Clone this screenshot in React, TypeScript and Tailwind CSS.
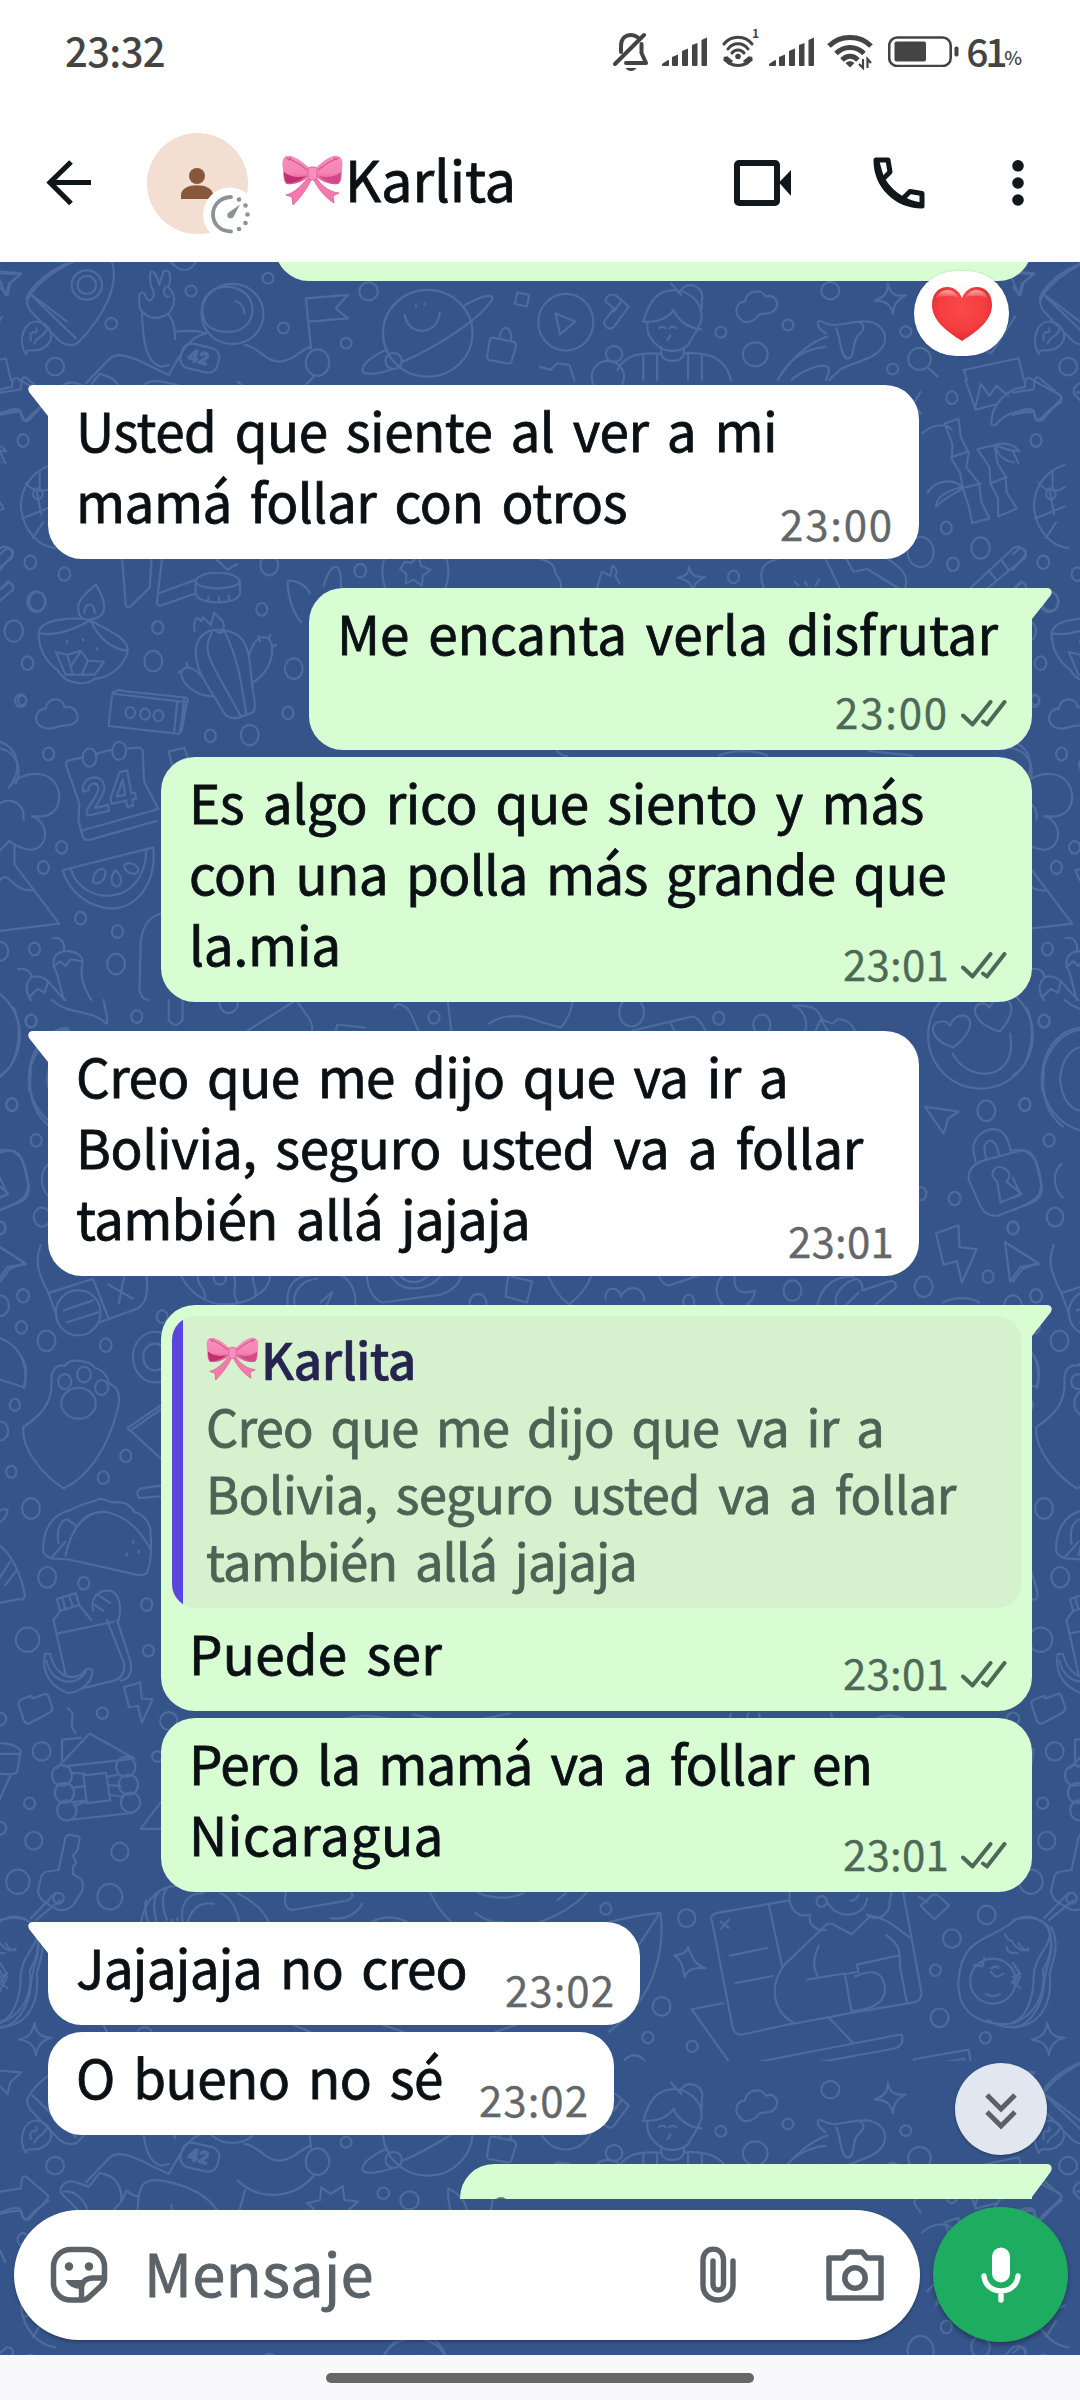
import { useLayoutEffect, useRef, useState, type ReactNode } from "react"
import clsx from "clsx"

type LineText = { text: string; width: number }

type Message = {
  lines: LineText[]
  time: string
  out?: boolean
  tail?: boolean
  box: string
  lastRow?: string
  quote?: { name: string; lines: LineText[] }
}

const messages: Message[] = [
  {
    lines: [
      { text: "Usted que siente al ver a mi", width: 701 },
      { text: "mamá follar con otros", width: 551 },
    ],
    time: "23:00",
    tail: true,
    box: "mt-[104px] w-[871px]",
  },
  {
    lines: [
      { text: "Me encanta verla disfrutar", width: 661 },
      { text: "", width: 0 },
    ],
    time: "23:00",
    out: true,
    tail: true,
    box: "mt-[29px] w-[723px]",
    lastRow: "h-[83px]",
  },
  {
    lines: [
      { text: "Es algo rico que siento y más", width: 735 },
      { text: "con una polla más grande que", width: 757 },
      { text: "la.mia", width: 152 },
    ],
    time: "23:01",
    out: true,
    box: "mt-[7px] w-[871px]",
  },
  {
    lines: [
      { text: "Creo que me dijo que va ir a", width: 712 },
      { text: "Bolivia, seguro usted va a follar", width: 787 },
      { text: "también allá jajaja", width: 454 },
    ],
    time: "23:01",
    tail: true,
    box: "mt-[29px] w-[871px]",
  },
  {
    lines: [{ text: "Puede ser", width: 253 }],
    time: "23:01",
    out: true,
    tail: true,
    box: "mt-[29px] w-[871px]",
    quote: {
      name: "Karlita",
      lines: [
        { text: "Creo que me dijo que va ir a", width: 678 },
        { text: "Bolivia, seguro usted va a follar", width: 750 },
        { text: "también allá jajaja", width: 431 },
      ],
    },
  },
  {
    lines: [
      { text: "Pero la mamá va a follar en", width: 683 },
      { text: "Nicaragua", width: 255 },
    ],
    time: "23:01",
    out: true,
    box: "mt-[7px] w-[871px]",
  },
  { lines: [{ text: "Jajajaja no creo", width: 391 }], time: "23:02", tail: true, box: "mt-[30px] w-[592px]" },
  { lines: [{ text: "O bueno no sé", width: 367 }], time: "23:02", box: "mt-[7px] w-[566px]" },
]

const timeWidths: Record<string, number> = { "23:00": 114, "23:01": 106, "23:02": 110 }

// spreads the letters so the line takes exactly `width` px
const Fit = ({ text, width }: LineText) => {
  const ref = useRef<HTMLSpanElement>(null)
  const [spacing, setSpacing] = useState(0)

  useLayoutEffect(() => {
    if (!ref.current || !text) return
    const natural = ref.current.getBoundingClientRect().width
    setSpacing((width - natural) / text.length)
  }, [])

  return (
    <span ref={ref} className="inline-block whitespace-nowrap" style={{ letterSpacing: spacing }}>
      {text}
    </span>
  )
}

const Bow = ({ className }: { className?: string }) => (
  <svg viewBox="0 0 61 50" className={className} fill="none">
    <defs>
      <linearGradient id="bow" x1="0" y1="0" x2="0" y2="1">
        <stop offset="0" stopColor="#f990bd" />
        <stop offset="0.6" stopColor="#f583b3" />
        <stop offset="1" stopColor="#dc4c8d" />
      </linearGradient>
    </defs>
    <path d="M25 24 C18 32 12 38 4 40 L10 42 L11 50 C18 43 25 34 29 25 Z" fill="#f47aae" stroke="#d95a95" strokeWidth="0.8" />
    <path d="M35 24 C41 32 48 37 57 38 L51 41 L52 48 C44 43 36 34 32 25 Z" fill="#f47aae" stroke="#d95a95" strokeWidth="0.8" />
    <path d="M27 13 C19 5 10 0 5 1 C0 2 0 8 1 14 C1 22 2 28 5 29 C12 30 20 27 27 22 Z" fill="url(#bow)" />
    <path d="M34 13 C42 5 50 0 55 1 C61 2 61 8 60 14 C60 22 59 28 56 29 C49 30 41 27 34 22 Z" fill="url(#bow)" />
    <path d="M2 20 C3 26 4 28 6 28 C12 28 18 26 24 21 C16 23 8 22 2 17 Z" fill="#c22e72" />
    <path d="M59 20 C58 26 57 28 55 28 C49 28 43 26 37 21 C45 23 53 22 59 17 Z" fill="#d34a87" />
    <path d="M4 3 C11 5 19 10 25 15 M57 3 C50 5 42 10 36 15 M9 2 C8 4 7 5 6 5 M52 2 C53 4 54 5 55 5" stroke="#d65290" strokeWidth="1.2" />
    <rect x="26" y="12" width="9" height="13" rx="3" fill="#f78fbd" stroke="#d95a95" strokeWidth="0.8" />
  </svg>
)

const Heart = () => (
  <svg viewBox="0 0 60 54" className="h-[54px] w-[60px]">
    <defs>
      <radialGradient id="heart" cx="0.5" cy="0.4" r="0.65">
        <stop offset="0" stopColor="#fb4a48" />
        <stop offset="0.6" stopColor="#f43d3f" />
        <stop offset="1" stopColor="#d9252c" />
      </radialGradient>
      <linearGradient id="gloss" x1="0" y1="0" x2="0" y2="1">
        <stop offset="0" stopColor="#fff" stopOpacity="0.55" />
        <stop offset="1" stopColor="#fff" stopOpacity="0" />
      </linearGradient>
    </defs>
    <path d="M30 11 C27 4 22 0 15.500 0 C6 0 0 7 0 18 C0 33 14 44 30 54 C46 44 60 33 60 18 C60 7 54 0 44.500 0 C38 0 33 4 30 11 Z" fill="url(#heart)" />
    <path d="M4 12 C6 3 20 -2 27 11 C20 8 10 8 4 12 Z M33 11 C40 -2 54 3 56 12 C50 8 40 8 33 11 Z" fill="url(#gloss)" />
  </svg>
)

const Ticks = () => (
  <svg viewBox="0 0 46 28" className="mb-[4px] h-[28px] w-[46px]" fill="none" stroke="currentColor" strokeWidth="4" strokeLinecap="round" strokeLinejoin="round">
    <path d="M2 15.500 L11.500 24.500 L29.500 2 M22 21.500 L26 24.500 L43.500 2" />
  </svg>
)

const Tail = ({ out, className = "h-[31px]" }: { out?: boolean; className?: string }) => (
  <svg
    viewBox="0 0 21 30"
    preserveAspectRatio="none"
    className={clsx("absolute top-0 w-[21px]", className, out ? "-right-[20px] -scale-x-100 text-[#d8fdd2]" : "-left-[20px] text-white")}
  >
    <path d="M21 0 H5 C0 0 -1 4.500 2 8 L20 30 H21 Z" fill="currentColor" />
  </svg>
)

const SignalBars = ({ className }: { className?: string }) => (
  <svg viewBox="0 0 46 30" className={clsx("h-[30px] w-[46px] fill-[#444]", className)}>
    <path d="M0 27 L6 23 Q7 23 7 24 V28 Q7 29 6 29 H1 Q0 29 0 28 Z" />
    <path d="M10 20 L16 17.500 V28 Q16 29 15 29 H11 Q10 29 10 28 Z" />
    <path d="M20 14 L26 11.500 V28 Q26 29 25 29 H21 Q20 29 20 28 Z" />
    <path d="M30 8 L35.500 6 V28 Q35.500 29 34.500 29 H31 Q30 29 30 28 Z" />
    <path d="M39.500 3 L45 0.500 V28 Q45 29 44 29 H40.500 Q39.500 29 39.500 28 Z" />
  </svg>
)

// doodle wallpaper, one tile is 1013 x 1799
const Doodles = () => (
  <>
    <g transform="scale(0.3444 0.3333)">
      <path d="M325 785 C345 850 310 940 225 1030 C210 1040 185 1035 170 1020 L95 940 C80 925 75 905 82 895 C110 840 190 790 250 770 M95 890 L220 1015" />
      <circle cx="252" cy="855" r="44" />
      <circle cx="252" cy="855" r="27" />
      <path d="M75 1062 C50 1020 70 960 110 965 C150 975 165 1020 125 1045 C100 1060 80 1040 75 1062 M90 1020 C80 980 115 1010 105 985 M100 1030 C115 1000 120 1020 135 990" />
      <path d="M405 905 C400 870 420 870 425 895 C440 915 455 880 440 862 C425 800 450 800 462 855 L475 815 C495 800 500 840 487 860 C520 890 505 940 470 950 C430 965 400 930 405 905 M412 940 C415 1010 420 1090 470 1100 L490 1095 M490 945 C510 970 508 1000 508 1018 M480 860 C470 880 480 890 490 890" />
      <circle cx="675" cy="942" r="90" />
      <path d="M595 965 C570 900 610 860 660 860 C730 865 750 930 720 970 C690 1010 610 1000 595 965 M685 903 Q710 915 710 942" />
      <path d="M510 995 C560 990 580 995 600 1000 C550 1010 530 1050 490 1125 L400 1080 C350 1060 330 1060 310 1085 L250 1150 M710 1035 C750 1040 770 1085 810 1085 C850 1085 870 1050 903 1040" />
      <rect x="525" y="1037" width="110" height="75" rx="28" transform="rotate(14 580 1075)" />
      <text x="545" y="1090" fontSize="48" fontFamily="Inter" transform="rotate(14 580 1075)">42</text>
      <path d="M903 1045 L888 895 L1010 885 L975 925 L1010 955 L895 965 M495 785 Q540 835 570 785" />
      <ellipse cx="922" cy="1088" rx="34" ry="40" />
      <circle cx="1242" cy="1000" r="130" />
      <path d="M1350 915 C1420 875 1440 885 1425 905 C1380 970 1250 1050 1165 1087 M1140 1108 C1090 1125 1040 1130 1055 1100 C1065 1080 1100 1060 1125 1048 M1175 945 C1185 1010 1270 1010 1277 937 M1208 916 V920 M1232 910 V914" />
      <circle cx="1143" cy="1083" r="24" />
      <path d="M1430 1013 L1490 1025 Q1500 1028 1498 1040 L1485 1085 Q1482 1093 1472 1090 L1420 1080 Q1412 1076 1415 1066 L1422 1020 Q1424 1012 1430 1013 M1450 1013 C1455 970 1490 975 1483 1022" />
      <path d="M1502 877 L1537 885 L1530 919 L1495 912 Z M0 815 L62 820 L30 850 L22 885 L0 862" />
      <circle cx="778" cy="835" r="16" />
      <circle cx="555" cy="873" r="16" />
      <circle cx="323" cy="971" r="17" />
      <circle cx="823" cy="984" r="16" />
      <circle cx="1005" cy="1030" r="16" />
      <circle cx="1070" cy="874" r="27" />
      <circle cx="160" cy="1100" r="26" />
    </g>
    <g transform="translate(540 0) scale(0.3444 0.3333)">
      <ellipse cx="75" cy="967" rx="80" ry="85" />
      <path d="M45 940 L102 965 L58 1003 Z M190 905 C195 880 215 880 225 890 L258 920 L215 980 C200 995 180 975 188 962 L215 925 Z M215 935 L235 905" />
      <path d="M300 965 C320 890 350 870 395 870 C450 880 475 920 468 960 C460 990 440 1015 430 1035 C410 1055 370 1060 345 1040 C310 1010 310 990 312 970 M300 965 C345 970 375 950 388 930 C400 960 430 985 468 988 M380 850 L410 885 M410 870 C430 840 480 860 470 900 L470 925 M345 985 q10 -10 20 0 M375 985 q10 -10 20 0 M375 1010 Q385 1000 370 1020" />
      <path d="M352 1040 V1062 C280 1055 245 1070 225 1110 M418 1045 V1060 C500 1055 540 1080 555 1140 M340 1062 V1140 M430 1062 V1140 M352 1062 C360 1090 410 1090 418 1062 M300 1065 V1140 M470 1065 V1140" />
      <path d="M585 960 C560 940 570 905 595 905 C600 870 645 865 655 890 C680 880 695 905 685 925 C670 950 645 935 635 945 C620 970 590 970 585 960" />
      <path d="M690 1140 C720 1080 760 1050 830 1040 M830 1000 C800 980 800 955 820 965 C850 985 870 970 930 965 C980 960 1010 990 1000 1030 C980 1080 920 1080 870 1110 L840 1140 M860 985 C875 1020 870 1060 890 1075 C920 1080 900 1020 930 1000 C945 985 940 970 925 966 M700 1125 C740 1060 800 1020 835 1010" />
      <path d="M1010 850 C1015 885 1035 890 1062 886 C1035 900 1025 920 1025 942 C1020 915 1000 900 972 902 C1000 890 1010 880 1010 850 Z" />
      <path d="M1365 820 L1435 822 L1400 850 L1390 885 Z M1450 895 C1470 850 1520 810 1570 790 M1465 885 L1568 965 M1230 1110 L1390 1075 L1405 1140 M1240 1140 L1230 1110 M1380 950 L1310 1060 L1290 1050" />
      <path d="M0 1100 L30 1110 L50 1090 L85 1095 L100 1140" />
      <circle cx="215" cy="1062" r="24" />
      <circle cx="197" cy="1130" r="47" />
      <circle cx="1102" cy="1077" r="33" />
      <path d="M1125 1102 L1155 1130" />
      <circle cx="843" cy="872" r="26" />
      <circle cx="625" cy="1063" r="36" />
      <circle cx="720" cy="975" r="16" />
      <circle cx="525" cy="997" r="16" />
      <circle cx="1062" cy="995" r="16" />
      <circle cx="1024" cy="1107" r="16" />
      <path d="M830 1140 C870 1060 760 1110 730 1140" />
    </g>
    <g transform="translate(0 341) scale(0.3444 0.3333)">
      <path d="M0 155 L60 145 L64 115 Q68 105 78 112 L138 165 Q142 171 137 178 L85 237 Q75 245 68 235 L60 212 Q30 213 0 222" />
      <path d="M290 98 L258 140 L215 125 C190 120 170 140 178 160 L235 220 M185 155 C210 150 240 170 255 210 M295 100 C340 110 355 140 352 185 L330 210 M352 185 L367 152 L385 165 L403 170 M400 210 C400 130 420 115 470 122 C540 135 600 165 630 210 M498 195 V210" />
      <path d="M890 190 L930 180 L932 142 L960 162 L995 138 L1000 180 L1040 185 L1010 212 M895 190 L915 212 M690 122 C760 190 860 170 910 108 M712 150 L695 210" />
      <path d="M1300 145 C1300 190 1310 230 1330 260 M1300 145 Q1350 170 1355 210 M1430 165 Q1430 200 1420 230 M1115 645 C1150 580 1260 580 1290 645" />
      <circle cx="1113" cy="160" r="17" />
      <circle cx="1189" cy="181" r="27" />
    </g>
    <g transform="translate(0 380) scale(0.3444 0.3954)">
      <path d="M0 85 C30 75 60 65 62 85 C70 110 80 105 95 85 L140 55" />
      <path d="M150 215 C90 230 55 280 62 330 C70 380 110 420 160 425 M75 260 C100 290 140 280 150 270 M65 350 L150 320 M95 400 L125 360 M105 275 L120 340 M115 230 V280" />
      <circle cx="110" cy="288" r="14" />
      <circle cx="67" cy="153" r="16" />
      <path d="M0 440 L20 425 Q38 425 38 440 L0 480 M0 530 L22 510 Q40 515 38 530 L0 558 M0 180 L15 210" />
      <circle cx="88" cy="461" r="17" />
      <circle cx="187" cy="491" r="17" />
      <circle cx="105" cy="561" r="26" />
      <circle cx="40" cy="635" r="27" />
      <circle cx="80" cy="716" r="17" />
      <circle cx="60" cy="811" r="16" />
      <circle cx="445" cy="711" r="26" />
      <circle cx="458" cy="626" r="16" />
      <path d="M112 640 C120 600 220 600 262 607 C300 630 380 650 370 690 C350 740 300 755 275 755 C250 775 190 770 168 735 C130 710 112 680 112 640 C160 650 220 630 262 607 M262 607 C290 660 330 680 370 685 M230 590 C215 555 260 535 278 517 C310 560 315 600 265 605 C235 610 230 595 230 590 M245 590 C245 560 275 560 275 590 M162 688 L195 695 L235 685 L255 710 L302 712 L275 745 H190 Z M195 695 L210 740 M235 685 L205 725 M255 710 L240 740 M195 660 v4 M241 655 v4 M282 678 v4" />
      <path d="M355 455 L365 570 Q372 580 382 570 L435 525 M470 455 L455 565 Q460 575 475 568 L568 540 M435 525 L440 455 M460 540 L568 505 M568 510 C570 480 690 480 697 510 V540 C690 570 575 570 568 540 Z M568 510 C580 535 690 530 697 510 M630 455 L660 480 L690 465 M605 548 V558 M636 550 V560 M664 546 V556" />
      <path d="M565 635 C560 605 570 595 585 610 L590 600 L612 620 L622 588 L648 612 C655 635 640 650 625 632 M625 632 C560 640 550 700 600 770 L655 848 Q675 860 700 852 L735 840 Q745 830 735 790 C720 700 735 630 625 632 M615 640 C580 690 620 720 700 852 M650 632 C690 700 700 760 715 845 M722 700 C740 640 780 640 790 670 C795 720 760 750 735 765 M620 800 C560 800 520 760 528 735 C545 715 580 740 590 755 M755 660 L750 648 M780 655 L785 645 M792 675 L802 670 M530 735 L518 740 M545 725 L542 715" />
      <path d="M835 508 C835 560 860 600 875 612 M835 508 C860 505 890 520 900 540 M940 520 C950 490 965 465 982 475 C992 490 990 510 990 526" />
      <path d="M325 800 L315 875 L520 895 L542 815 L325 793 Q340 780 360 787 L540 803 Q550 806 542 818 L528 885 L520 895 M535 805 L525 880 M325 793 L515 812 L505 893" />
      <circle cx="378" cy="841" r="14" />
      <circle cx="421" cy="845" r="14" />
      <circle cx="460" cy="849" r="14" />
      <path d="M110 870 C95 850 115 830 132 832 C140 800 180 800 188 828 C215 820 235 850 220 865 C200 880 180 870 165 878 C140 885 120 880 110 870 Z" />
      <circle cx="760" cy="580" r="16" />
      <circle cx="853" cy="730" r="26" />
      <circle cx="836" cy="842" r="16" />
      <circle cx="725" cy="898" r="26" />
      <circle cx="611" cy="900" r="16" />
      <circle cx="141" cy="946" r="16" />
      <circle cx="782" cy="468" r="26" />
      <circle cx="1046" cy="482" r="17" />
      <circle cx="1206" cy="485" r="96" />
      <path d="M1175 460 L1195 462 L1215 445 L1222 470 L1250 480 L1228 495 L1225 520 L1200 505 L1178 515 L1180 490 L1162 478 Z" />
      <path d="M238 955 L200 962 Q190 965 192 975 L230 1070 M280 945 L325 935 M368 932 L405 930 Q415 932 415 945 L418 1015 M230 1070 L228 1115 L240 1155 Q245 1165 260 1163 L455 1115 M235 1140 L460 1085 M418 1015 L460 1085" />
      <ellipse cx="260" cy="955" rx="20" ry="23" />
      <ellipse cx="346" cy="938" rx="20" ry="23" />
      <text x="237" y="1088" fontSize="124" fontWeight="700" fontFamily="Inter" transform="rotate(-11 320 1050)">24</text>
      <path d="M490 940 L535 930 L545 955 L500 975 Z M182 1240 L445 1182 C455 1260 410 1330 330 1337 C250 1335 200 1290 182 1240 M205 1233 C230 1330 420 1340 425 1188 M270 1270 C270 1245 290 1230 305 1240 C310 1260 290 1280 270 1270 M335 1240 C315 1260 325 1285 345 1280 C358 1270 350 1250 335 1240 M360 1228 C370 1215 400 1225 402 1240 C395 1255 365 1250 360 1228" />
      <path d="M0 915 C50 930 70 980 25 1032 C60 980 175 980 172 1060 C165 1110 110 1105 92 1103 C150 1120 140 1190 85 1188 C60 1185 30 1170 28 1165 L0 1190 M0 1070 C30 1055 75 1070 68 1112 M42 1175 V1225 L172 1375 L0 1393 M0 1265 C20 1245 30 1270 50 1280 Q70 1293 95 1290" />
      <circle cx="179" cy="1182" r="16" />
      <circle cx="126" cy="1233" r="16" />
      <circle cx="234" cy="1361" r="16" />
      <circle cx="341" cy="1395" r="16" />
      <circle cx="337" cy="1477" r="26" />
      <circle cx="100" cy="1439" r="16" />
      <circle cx="0" cy="1445" r="24" />
      <path d="M152 1412 C180 1405 190 1430 185 1445 C150 1450 150 1480 165 1500 L185 1568 M185 1445 C220 1440 240 1460 240 1470 C230 1510 245 1540 265 1568 M155 1485 L175 1470 L190 1482 L205 1465 L238 1470 M52 1490 C80 1485 90 1500 92 1510 C70 1530 75 1550 90 1568 M92 1510 C140 1500 150 1540 190 1568 M85 1560 L110 1540 L130 1550 L140 1520 M467 1350 C420 1360 408 1400 408 1440 L405 1540 Q410 1568 430 1568" />
    </g>
    <g transform="translate(540 380) scale(0.3444 0.3954)">
      <path d="M1235 0 L1265 75 L1330 60 M1265 65 L1280 10 L1305 40 L1325 15 L1360 40 M1310 110 C1310 60 1360 20 1408 18 L1410 0 Q1420 -10 1430 0 L1510 38 Q1518 45 1510 52 L1450 100 Q1440 105 1437 95 L1433 80 C1390 75 1350 85 1325 112 Q1312 118 1310 110 Z" />
      <path d="M1110 135 C1140 110 1180 110 1195 125 M1175 110 L1215 98 L1222 145 L1245 185 L1238 220 L1275 262 L1282 310 L1305 350 L1255 362 L1245 320 L1228 275 L1220 235 L1195 200 L1198 165 Z M1195 195 L1245 180 M1220 275 L1280 262 M1125 285 C1150 250 1200 250 1225 270 C1190 280 1150 290 1150 320 C1170 300 1200 290 1225 275 M1270 175 L1320 165 L1328 210 L1352 245 L1355 285 L1385 325 L1330 345 L1330 300 L1308 262 L1305 220 Z M1308 262 L1355 245 M1320 165 C1350 155 1380 165 1392 180 C1360 180 1340 170 1320 165 C1330 190 1350 205 1375 208" />
      <circle cx="1196" cy="45" r="16" />
      <circle cx="1180" cy="374" r="16" />
      <circle cx="1279" cy="425" r="27" />
      <circle cx="1199" cy="466" r="17" />
      <circle cx="1105" cy="435" r="38" />
      <circle cx="562" cy="498" r="16" />
      <path d="M1250 526 L1375 425 Q1400 415 1410 440 Q1412 450 1400 455 L1300 526 M1305 485 L1325 505 M1340 455 L1360 480 M1400 510 L1380 526 M650 526 C630 480 650 460 690 453 M830 453 L870 526 M770 510 L775 520 M810 505 L800 520 M740 510 L750 520 M890 453 L910 485 L950 478 L1040 526 M1010 453 C1060 480 1070 500 1060 526" />
      <path d="M432 472 C440 495 450 500 480 498 C455 508 445 515 445 540 C440 510 425 505 400 500 C425 495 432 490 432 472 Z M165 526 L180 485 L205 495 L210 470 Q230 480 218 495 L232 515 M0 453 Q45 460 45 490 Q65 510 60 526" />
      <path d="M1105 30 L1085 60 L1105 85" />
      <circle cx="1482" cy="560" r="24" />
      <circle cx="1438" cy="810" r="12" />
      <path d="M1360 930 C1420 935 1440 980 1420 1020 M955 938 L1080 950 M520 950 C560 935 620 935 660 950 M50 938 Q60 950 80 952" />
    </g>
    <g transform="translate(0 1000) scale(0.3444 0.3954)">
      <path d="M150 0 C200 40 260 20 310 60 Q315 50 300 0 M0 190 C50 170 70 80 40 20 M490 0 V50 Q510 75 530 50 V0 M85 230 C75 150 130 80 200 75 M145 320 C100 290 80 240 90 180 M720 77 L860 0 L900 50 Q910 70 905 77 M1145 20 C1150 0 1180 15 1190 30 L1215 77 M975 77 L980 62 L1060 70 M1300 0 L1310 77 M1420 60 C1460 35 1520 35 1568 55" />
      <path d="M0 380 C50 375 70 400 80 450 C90 500 60 510 0 532 M0 450 L22 492 L0 500 M140 415 C110 440 120 480 145 500" />
      <circle cx="90" cy="53" r="16" />
      <circle cx="397" cy="42" r="16" />
      <circle cx="664" cy="6" r="27" />
      <circle cx="1260" cy="44" r="16" />
      <circle cx="34" cy="264" r="16" />
      <circle cx="105" cy="355" r="16" />
      <circle cx="122" cy="549" r="24" />
      <circle cx="0" cy="577" r="16" />
      <path d="M0 625 L72 665 L28 680 L0 712 M118 620 C100 660 110 690 140 740 L165 800 M145 740 L270 705 M270 705 L315 805 M290 815 L400 780 C430 765 430 730 425 697 M315 720 L385 755 M360 700 L345 768 M185 785 L270 760 M195 815 L285 790" />
      <ellipse cx="227" cy="791" rx="65" ry="57" />
      <circle cx="67" cy="748" r="17" />
      <circle cx="0" cy="773" r="26" />
      <circle cx="62" cy="828" r="16" />
      <circle cx="135" cy="862" r="26" />
      <circle cx="307" cy="873" r="17" />
      <circle cx="471" cy="801" r="16" />
      <circle cx="450" cy="903" r="34" />
      <circle cx="450" cy="903" r="64" />
      <path d="M525 697 C560 760 630 770 650 770 C720 770 780 740 785 697 M575 700 C570 720 600 730 595 755 M680 700 C690 720 670 740 690 765 M735 700 C730 720 750 730 740 750 M835 770 C830 720 860 697 900 697 M990 697 C1020 710 1035 740 1032 770 M855 770 C850 740 870 710 920 705 M930 765 L965 738 L950 770 M1065 697 Q1070 750 1110 765 L1280 745 Q1330 730 1340 697 M1135 697 C1160 740 1240 740 1280 697 M1160 697 Q1200 730 1245 697 M1475 697 L1545 712 L1530 765 L1468 750 Z" />
      <circle cx="638" cy="702" r="18" />
      <circle cx="1388" cy="768" r="25" />
      <path d="M0 855 C60 875 80 920 72 980 L0 960 M68 1080 C120 1050 150 1020 150 970 C145 935 165 920 190 925 C200 905 260 910 275 930 C300 935 315 955 315 970 C350 980 350 1010 340 1040 C310 1140 250 1210 185 1235 C120 1200 60 1130 68 1080 Z" />
      <ellipse cx="228" cy="1020" rx="50" ry="39" />
      <circle cx="188" cy="965" r="19" />
      <circle cx="244" cy="947" r="20" />
      <circle cx="295" cy="980" r="19" />
      <circle cx="43" cy="1024" r="15" />
      <circle cx="0" cy="1090" r="24" />
      <circle cx="33" cy="1193" r="15" />
      <circle cx="300" cy="1208" r="16" />
      <circle cx="365" cy="1153" r="16" />
      <circle cx="90" cy="1286" r="26" />
      <circle cx="137" cy="1460" r="26" />
      <circle cx="243" cy="1475" r="16" />
      <circle cx="426" cy="1529" r="16" />
      <path d="M467 1025 L370 1082 L467 1160 M385 1085 L467 1035 M467 1228 L410 1235 Q390 1245 405 1260 L467 1255" />
      <path d="M125 1390 C125 1340 150 1300 205 1290 C240 1270 280 1270 285 1262 C310 1260 320 1275 340 1270 C370 1270 385 1285 390 1295 C420 1300 440 1330 437 1350 C440 1380 440 1430 425 1450 Q410 1458 390 1452 L200 1415 L150 1412 Q125 1405 125 1390 M190 1405 C210 1330 250 1290 310 1295 C380 1310 410 1350 435 1385 M170 1375 C160 1330 190 1300 205 1320 Q230 1330 215 1345 M150 1410 L190 1370 M387 1368 v5 M368 1400 v5 M403 1393 v5 M0 1380 C40 1410 60 1450 72 1505 Q70 1520 55 1515 L0 1525 M0 1460 L30 1420 M15 1480 L50 1440 M0 1290 Q20 1285 22 1290 Q20 1310 0 1320" />
      <path d="M165 1515 L220 1500 L230 1530 L175 1545 Z M180 1510 L190 1540 M200 1505 L212 1535 M175 1545 L155 1568 M230 1530 L265 1568 M270 1545 C260 1500 300 1490 325 1495 C355 1510 350 1550 345 1568 M285 1505 L320 1525 M275 1530 L300 1545" />
    </g>
    <g transform="translate(540 1000) scale(0.3444 0.3954)">
      <path d="M95 0 Q90 40 60 70 L0 55 M270 77 L440 42 Q460 40 480 77 M380 60 L390 77 M735 15 C760 20 780 50 770 77 M735 15 C800 10 810 30 820 50 L850 60 L865 48 Q900 50 915 77 M800 77 L815 50 L835 77" />
      <ellipse cx="1279" cy="90" rx="152" ry="134" />
      <path d="M1200 120 C1130 100 1130 60 1160 55 Q1180 50 1190 65 Q1205 35 1235 40 C1265 55 1245 90 1200 120 M1335 80 C1260 60 1250 20 1275 10 Q1295 5 1305 20 Q1320 -10 1350 -5 C1385 15 1365 50 1335 80 M1198 135 C1240 210 1390 210 1365 85 M1118 270 L1215 282 L1185 300 L1172 338 Z M1265 410 L1258 380 C1255 330 1340 300 1360 360 L1368 382 M1295 400 L1290 375 C1295 345 1325 350 1332 390" />
      <path d="M1290 405 L1400 380 Q1430 380 1440 410 L1457 470 Q1460 500 1430 512 L1330 545 Q1295 550 1278 520 L1245 455 Q1240 420 1290 405 Z M1328 460 C1300 440 1320 415 1345 425 C1370 435 1365 450 1355 460 L1398 490 L1337 512 Z" />
      <path d="M1150 590 L1215 570 L1218 625 L1268 630 L1225 715 L1210 660 L1172 670 Z M1350 612 L1450 668 L1395 675 L1365 712 Z" />
      <path d="M23 697 Q50 750 85 770 Q130 740 150 697 M345 697 Q355 720 375 722 L460 697 M190 755 C190 720 230 725 235 750 C250 720 300 720 303 760 M530 770 C500 740 515 710 530 697 M565 700 C560 740 590 745 625 735 Q620 760 600 770 M805 770 C820 720 860 697 910 700 M860 770 C850 740 890 710 920 705 Q940 715 935 735 L1020 710 Q1040 715 1030 730 L975 770 M890 770 L925 740" />
      <path d="M1170 765 C1200 750 1250 750 1275 765" />
      <circle cx="266" cy="31" r="36" />
      <circle cx="519" cy="46" r="16" />
      <circle cx="644" cy="62" r="25" />
      <circle cx="1296" cy="280" r="26" />
      <circle cx="1204" cy="502" r="17" />
      <circle cx="1105" cy="490" r="17" />
      <circle cx="1373" cy="576" r="16" />
      <circle cx="1301" cy="700" r="16" />
      <circle cx="1114" cy="725" r="26" />
      <circle cx="733" cy="735" r="26" />
      <circle cx="432" cy="762" r="16" />
      <circle cx="1464" cy="53" r="16" />
      <circle cx="1408" cy="265" r="16" />
      <path d="M1457 200 C1460 110 1520 75 1568 70 M1457 200 C1460 270 1510 315 1568 330 M1510 200 C1515 150 1540 125 1568 120 M1510 200 C1515 250 1540 275 1568 280" />
      <path d="M1435 900 C1455 930 1450 960 1440 980" />
    </g>
    <g transform="translate(0 1620) scale(0.3444 0.3571)">
      <path d="M155 0 L190 150 M165 38 L330 5 M310 0 L360 120 Q365 160 330 170 L245 190 M340 0 L380 120 Q385 165 350 170 M130 95 C120 150 150 190 200 205 C240 200 270 170 268 140 Q250 130 240 150 C200 175 160 150 145 95 Z M135 115 C150 180 220 190 250 145" />
      <path d="M55 240 Q50 225 65 222 L90 212 L95 220 L130 207 Q140 207 142 218 L152 245 Q153 255 143 260 L85 290 Q75 292 70 283 Z M360 188 L407 175 L412 220 L443 222 L412 288 L400 240 L375 245 Z M197 247 C230 270 190 285 220 317" />
      <path d="M165 415 L260 318 L390 388 L185 410 M180 400 V335 L235 330 M205 428 L245 430 M310 440 L345 432 M210 470 L245 465 M315 462 L350 465 M210 510 L250 505 M320 490 L360 495 M200 560 L385 540 M215 520 L245 510 M242 435 L308 428 L320 505 L252 513 Z M467 510 L408 585 H467" />
      <circle cx="180" cy="435" r="29" />
      <circle cx="187" cy="484" r="28" />
      <circle cx="194" cy="533" r="28" />
      <circle cx="365" cy="411" r="28" />
      <circle cx="373" cy="461" r="28" />
      <circle cx="379" cy="511" r="28" />
      <path d="M0 345 Q40 345 60 365 L50 425 Q45 435 0 430 M32 432 L0 500 M60 375 H0" />
      <path d="M170 700 L190 610 Q195 600 205 602 L225 605 Q235 610 230 620 L225 645 L212 660 L222 680 L212 690 V712 M170 700 L135 705 Q120 710 118 725 L110 760 Q115 780 130 790 L170 812 Q200 815 215 795 L238 760 Q245 740 235 725 L212 712 M175 785 L105 840 M160 765 L90 835" />
      <circle cx="170" cy="779" r="15" />
      <circle cx="80" cy="55" r="34" />
      <circle cx="431" cy="86" r="16" />
      <circle cx="297" cy="261" r="16" />
      <circle cx="121" cy="368" r="26" />
      <circle cx="490" cy="283" r="25" />
      <circle cx="86" cy="513" r="16" />
      <circle cx="98" cy="618" r="25" />
      <circle cx="348" cy="649" r="25" />
      <circle cx="319" cy="775" r="36" />
      <circle cx="52" cy="733" r="34" />
      <circle cx="0" cy="277" r="18" />
      <circle cx="0" cy="583" r="18" />
      <circle cx="457" cy="382" r="15" />
      <path d="M0 840 C50 825 100 840 108 870 C110 920 60 940 60 1000 C60 1070 30 1120 0 1125 M105 870 C125 930 95 960 90 1020 C85 1090 40 1140 0 1142 M0 905 Q25 935 45 920 M0 960 L20 990 L0 1000 M20 1000 L10 1020" />
      <path d="M100 1128 C105 1160 120 1168 150 1170 C120 1175 108 1195 104 1218 C100 1190 85 1178 55 1175 C85 1168 95 1155 100 1128 Z" />
      <path d="M410 845 C420 780 470 740 520 745 M430 845 C420 820 420 790 425 785 M455 845 C440 800 450 770 460 765 M485 840 C460 780 480 750 495 745 M530 845 C520 780 560 765 590 765 M545 845 C560 800 590 790 620 795 M640 765 Q680 780 695 845 M690 765 Q760 800 780 845 M830 765 Q820 810 850 812 L1010 785 Q1030 775 1020 765 M960 835 C1000 840 1030 830 1052 795 M1250 765 Q1270 810 1310 845 M1380 820 Q1420 850 1460 845 M1390 765 Q1460 790 1520 765 M1080 845 Q1130 820 1180 845 M500 840 v6 M515 835 v6" />
      <path d="M300 1133 L310 1153 M400 1150 Q420 1130 440 1150 M850 1133 L900 1153 M1110 1133 L1170 1153 M1440 1153 L1500 1133 M1000 277 Q1060 260 1130 277 M1200 265 L1260 277 M1400 277 L1480 262" />
    </g>
    <g transform="translate(540 1620) scale(0.3444 0.3571)">
      <path d="M500 845 Q490 825 515 820 L725 785 M500 845 L560 1145 Q570 1165 590 1160 L735 1130 M665 800 L703 970 M1055 765 L1108 1045 Q1105 1065 1090 1070 L905 1100 M440 1090 L532 1073 M440 1090 L570 1265 Q580 1280 600 1275 L1030 1200 Q1060 1190 1050 1160 L565 1250 M840 1115 L910 1185 M525 845 L548 862 M548 840 L525 865 M552 940 L660 918 M568 1017 L675 997" />
      <path d="M835 850 L710 965 C660 1030 680 1100 740 1130 L905 1100 L885 990 L775 1007 M810 912 C790 950 795 980 808 1000 M835 850 L850 852 L905 880 L960 828 C1010 835 1045 870 1075 890 M1005 882 C1050 910 1045 940 1045 970 L1065 1070 M905 1095 C980 1090 1010 1060 1000 1020 C990 980 960 980 915 998 M885 992 L925 985 L920 965 L1040 940 M725 765 C720 810 750 835 785 825 C775 860 810 870 830 868 M830 780 C850 840 940 840 950 780 M950 825 C980 850 1020 820 1015 790 L1020 765" />
      <circle cx="818" cy="788" r="15" />
      <path d="M900 785 Q915 790 925 770 M0 845 Q80 820 135 765 M50 785 L75 765 M350 820 C250 830 190 850 200 846 M350 820 C360 900 350 1050 200 1153 M345 825 L270 935 M430 915 C440 945 450 965 480 975 C440 970 425 985 420 1000 C415 970 410 950 390 940 C420 935 430 925 430 915 Z" />
      <path d="M1105 800 L1140 770 Q1150 765 1160 775 L1188 800 L1145 838 Z M1100 775 L1125 790" />
      <path d="M1465 850 C1500 890 1480 950 1460 980 C1470 1060 1430 1110 1370 1130 C1280 1140 1210 1100 1215 1010 C1225 880 1310 900 1380 840 C1410 825 1440 830 1465 850 M1485 860 C1510 910 1490 950 1480 990 C1490 1090 1440 1140 1370 1140 Q1330 1140 1300 1120 M1350 880 Q1355 895 1372 900 M1355 915 Q1355 935 1385 933 M1390 905 Q1400 925 1418 925 M1260 965 L1285 970 L1290 945 M1395 990 L1370 1015 L1395 1030 M1310 975 Q1330 965 1330 975 M1310 985 Q1325 1010 1345 990 M1295 1048 Q1315 1058 1335 1048" />
      <ellipse cx="1315" cy="1011" rx="66" ry="63" />
      <path d="M1085 1230 L1245 1203 L1252 1250 M1085 1230 L1115 1390 L1205 1380 M1103 1252 L1232 1228 L1240 1270 M1103 1252 L1120 1340 L1205 1325" />
      <circle cx="426" cy="835" r="25" />
      <circle cx="191" cy="809" r="16" />
      <circle cx="353" cy="1082" r="26" />
      <circle cx="313" cy="1169" r="16" />
      <circle cx="442" cy="1194" r="16" />
      <circle cx="274" cy="1255" r="36" />
      <circle cx="924" cy="1268" r="16" />
      <circle cx="1148" cy="981" r="16" />
      <circle cx="1160" cy="1114" r="26" />
      <circle cx="1293" cy="1170" r="16" />
      <circle cx="1196" cy="892" r="26" />
      <circle cx="1297" cy="826" r="26" />
      <path d="M550 277 L555 262 M600 277 L605 262 M640 277 L635 262 M850 277 L845 262 M975 277 Q1010 258 1060 277" />
    </g>
  </>
)

const Wallpaper = () => (
  <svg viewBox="0 0 1080 2400" className="absolute -top-[262px] left-0 h-[2400px] w-[1080px]">
    <defs>
      <clipPath id="tile">
        <rect x="-1013" y="262" width="3039" height="1799" />
      </clipPath>
      <g
        id="doodles"
        fill="none"
        stroke="#4d6b9c"
        strokeWidth="2.200"
        strokeLinecap="round"
        strokeLinejoin="round"
        className="[&_*]:[vector-effect:non-scaling-stroke]"
      >
        <Doodles />
      </g>
    </defs>
    <g clipPath="url(#tile)">
      <use href="#doodles" />
      <use href="#doodles" x="1013" />
      <use href="#doodles" x="-1013" />
    </g>
    <g transform="translate(0 1799)">
      <g clipPath="url(#tile)">
        <use href="#doodles" />
        <use href="#doodles" x="1013" />
      </g>
    </g>
  </svg>
)

const StatusBar = () => (
  <div className="flex h-[104px] items-start justify-between pl-[65px] pr-[58px] pt-[27px] text-[#444]">
    <p className="-mt-[1px] text-[40px]/[48px] font-medium">
      <Fit text="23:32" width={100} />
    </p>
    <div className="flex h-[50px] items-start">
      <svg viewBox="0 0 36 40" className="mt-[5px] h-[40px] w-[36px]" fill="none" stroke="#444" strokeWidth="4" strokeLinecap="round" strokeLinejoin="round">
        <path d="M8 20 V14 C8 7 12 3 18 3 C21 3 23 4 25 5.500 M28.500 12 V21 L33 31 H13 M2 32 L31 3" />
        <path d="M12.500 36 H23.500 C21 40 15 40 12.500 36 Z" fill="#444" stroke="none" />
      </svg>
      <SignalBars className="ml-[13px] mt-[10px]" />
      <div className="relative ml-[14px] mt-[8px]">
        <svg viewBox="0 0 32 34" className="h-[34px] w-[32px]" fill="none" stroke="#444" strokeWidth="3" strokeLinecap="round">
          <path d="M2 9 C9 0 23 0 30 9 M6 14 C11 7 21 7 26 14 M10 18 C13 14 19 14 22 18" />
          <circle cx="16" cy="21.500" r="2.800" fill="#444" stroke="none" />
          <path d="M3 23 C8 33 24 33 29 23" strokeWidth="3" />
          <path d="M2 25 L5 22 L10 26 L7 29 Z M30 25 L27 22 L22 26 L25 29 Z" fill="#444" strokeWidth="1.500" />
        </svg>
        <span className="absolute -right-[5px] -top-[9px] text-[12px]/[14px] font-bold">1</span>
      </div>
      <SignalBars className="ml-[15px] mt-[10px]" />
      <svg viewBox="0 0 46 36" className="ml-[12px] mt-[7px] h-[36px] w-[46px]" fill="none" stroke="#444" strokeWidth="5">
        <path d="M2 12 C13 0.500 33 0.500 44 12 M9 19.500 C17 11.500 29 11.500 37 19.500 M15 26 C20 21 26 21 31 26" />
        <path d="M23 33.500 L18.500 29 C21 26.500 25 26.500 27.500 29 Z" fill="#444" stroke="none" />
        <path d="M36 25 V34 L32 30 M40.500 34 V25 L44 29" strokeWidth="2.200" />
      </svg>
      <svg viewBox="0 0 71 31" className="ml-[15px] mt-[9px] h-[31px] w-[71px]">
        <rect x="1.200" y="1.500" width="61.500" height="28.500" rx="8" fill="none" stroke="#444" strokeWidth="2.600" />
        <rect x="6.500" y="5.500" width="31.500" height="20" rx="2" fill="#444" />
        <rect x="66.500" y="10.500" width="4" height="10" rx="1.800" fill="#444" />
      </svg>
      <p className="-mt-[1px] ml-[7px] text-[39px]/[48px] font-medium">
        <Fit text="61" width={38} />
      </p>
      <p className="mt-[16px] text-[19px]/[28px] font-medium">%</p>
    </div>
  </div>
)

const Header = () => (
  <div className="flex h-[158px] items-center pb-[1px] pl-[46px] pr-[56px]">
    <svg viewBox="0 0 46 46" className="h-[46px] w-[46px] shrink-0" fill="none" stroke="#0f161a" strokeWidth="5.200">
      <path d="M45 22.500 H5 M25 2 L4 22.500 L25 43.500" />
    </svg>
    <div className="ml-[55px] mt-[2px] h-[101px] w-[101px] shrink-0">
      <svg viewBox="0 0 106 104" className="h-[104px] w-[106px]">
        <circle cx="50.500" cy="50.500" r="50.500" fill="#f3ded2" />
        <circle cx="50" cy="43" r="8" fill="#87593a" />
        <path d="M34 66 V62 C34 49 66 49 66 62 V66 H34 Z" fill="#87593a" />
        <circle cx="83" cy="81.500" r="27" fill="#fff" />
        <path d="M84 64 C60 65 60 98 84 98.500" fill="none" stroke="#8a9497" strokeWidth="3.800" strokeLinecap="round" />
        <path d="M81 80 L93 71.500 L86.500 84 C83 87.500 78.500 84 81 80 Z" fill="#8a9497" />
        <g fill="#8a9497">
          <circle cx="92" cy="66.500" r="2.300" />
          <circle cx="98.500" cy="72.500" r="2.300" />
          <circle cx="100.500" cy="81.500" r="2.300" />
          <circle cx="98.500" cy="90" r="2.300" />
          <circle cx="92" cy="96" r="2.300" />
        </g>
      </svg>
    </div>
    <Bow className="-mt-[5px] ml-[34px] h-[50px] w-[61px] shrink-0" />
    <p className="-mt-[10px] ml-[2px] flex-1 text-[56px]/[70px] text-[#0a1014] [-webkit-text-stroke:0.8px]">
      <Fit text="Karlita" width={171} />
    </p>
    <svg viewBox="0 0 58 46" className="h-[46px] w-[58px]" fill="none" stroke="#10181c" strokeWidth="6">
      <rect x="3" y="3" width="40" height="40" rx="2" />
      <path d="M45 22.500 L57 10 V36 Z" fill="#10181c" stroke="none" />
    </svg>
    <svg viewBox="0 0 52 52" className="ml-[81px] h-[52px] w-[52px]" fill="none" stroke="#10181c" strokeWidth="5" strokeLinejoin="round">
      <path d="M3 3 H15 L17 15 L9.500 22.500 C15 31.500 20.500 37 29.500 42 L37 34.500 L49 36.500 V49 C22 49 3 28 3 3 Z" />
      <path d="M9.500 22.500 C7 17 5.500 10 4 5 M29.500 42 C36 45.500 42 47 48 48" />
    </svg>
    <svg viewBox="0 0 12 46" className="ml-[87px] h-[46px] w-[12px] fill-[#10181c]">
      <circle cx="6" cy="5.800" r="5.800" />
      <circle cx="6" cy="23" r="5.800" />
      <circle cx="6" cy="40" r="5.800" />
    </svg>
  </div>
)

const Quote = ({ name, lines }: { name: string; lines: LineText[] }) => (
  <div className="mx-[11px] mb-[9px] mt-[11px] flex h-[292px] overflow-hidden rounded-[24px] bg-[#d6f1cd]">
    <div className="w-[11px] shrink-0 bg-[#5b45dc]" />
    <div className="flex flex-col pl-[23px] pt-[9px]">
      <div className="flex h-[67px] items-center">
        <Bow className="h-[43px] w-[53px]" />
        <p className="ml-[2px] text-[50px]/[67px] font-medium text-[#26244f] [-webkit-text-stroke:0.5px]">
          <Fit text={name} width={155} />
        </p>
      </div>
      <div className="text-[50.5px]/[67px] text-[#4d6355] [-webkit-text-stroke:0.8px] [word-spacing:7px]">
        {lines.map((line) => (
          <p key={line.text}>
            <Fit {...line} />
          </p>
        ))}
      </div>
    </div>
  </div>
)

const Bubble = ({ msg }: { msg: Message }) => {
  const { lines, time, out, tail, box, lastRow, quote } = msg
  return (
    <div
      className={clsx(
        "relative flex flex-col whitespace-nowrap rounded-[34px]",
        box,
        out ? "self-end bg-[#d8fdd2]" : "self-start bg-white",
        tail && (out ? "rounded-tr-none" : "rounded-tl-none")
      )}
    >
      {tail && <Tail out={out} />}
      {quote ? <Quote {...quote} /> : <div className="h-[9px]" />}
      <div className="-mb-px pl-[28px] pr-[25px] text-[53px]/[71px] text-[#0a1014] [-webkit-text-stroke:0.8px] [word-spacing:7px]">
        {lines.slice(0, -1).map((line) => (
          <p key={line.text}>
            <Fit {...line} />
          </p>
        ))}
        <div className={clsx("flex items-end justify-between", lastRow ?? "h-[95px]")}>
          <p className="mb-[24px] h-[71px]">
            <Fit {...lines[lines.length - 1]} />
          </p>
          <div
            className={clsx(
              "flex items-end gap-[12px] [-webkit-text-stroke:0.3px]",
              out ? "mb-[19px] text-[#4f6957]" : "mb-[16px] text-[#636769]"
            )}
          >
            <p className="text-[42px]/[42px]">
              <Fit text={time} width={timeWidths[time]} />
            </p>
            {out && <Ticks />}
          </div>
        </div>
      </div>
    </div>
  )
}

const RoundButton = ({ className, children }: { className: string; children: ReactNode }) => (
  <button className={clsx("flex shrink-0 items-center justify-center rounded-full", className)}>{children}</button>
)

const Composer = () => (
  <div className="flex items-center justify-between pl-[14px] pr-[12px]">
    <div className="flex h-[130px] w-[906px] items-center rounded-full bg-white pl-[36px] pr-[36px] shadow-[0_2px_3px_rgba(0,0,0,0.25)]">
      <svg viewBox="0 0 58 58" className="h-[58px] w-[58px]" fill="none" stroke="#5b6368" strokeWidth="5.500" strokeLinejoin="round">
        <path d="M21 3.500 H37 C47 3.500 54.500 11 54.500 21 V32 C54.500 35 53 38 51 40 L39 51 C37 53 35 54 32 54 H21 C11 54 3.500 47 3.500 37 V21 C3.500 11 11 3.500 21 3.500 Z" />
        <path d="M31.500 52 V43 C31.500 36 36 32 43 32 H53" />
        <circle cx="19" cy="20.500" r="4.200" fill="#5b6368" stroke="none" />
        <circle cx="39" cy="20.500" r="4.200" fill="#5b6368" stroke="none" />
        <path d="M15.500 34 H37 L31 43 C24 43 18 40 15.500 34 Z" fill="#5b6368" stroke="none" />
      </svg>
      <p className="-mt-[5px] ml-[36px] flex-1 text-[59px]/[80px] text-[#5b6368] [-webkit-text-stroke:0.9px]">
        <Fit text="Mensaje" width={230} />
      </p>
      <svg viewBox="0 0 36 58" className="h-[58px] w-[36px]" fill="none" stroke="#5b6368" strokeWidth="5.400" strokeLinecap="round">
        <path d="M33 15 V39 C33 59 3 59 3 39 V14 C3 -0.500 23.500 -0.500 23.500 14 V38 C23.500 46 13 46 13 38 V15" />
      </svg>
      <svg viewBox="0 0 58 52" className="ml-[90px] h-[52px] w-[58px]" fill="none" stroke="#5b6368" strokeWidth="5.500" strokeLinejoin="round">
        <path d="M3 9 H17 L22 3 H36 L41 9 H55 V49 H3 Z" />
        <circle cx="29" cy="29" r="10.200" />
      </svg>
    </div>
    <RoundButton className="h-[135px] w-[135px] bg-[#1eac61] shadow-[0_3px_5px_rgba(0,0,0,0.3)]">
      <svg viewBox="0 0 40 56" className="h-[56px] w-[40px]" fill="none" stroke="#fff" strokeWidth="5.400" strokeLinecap="round">
        <rect x="11" y="0.500" width="18" height="35" rx="9" fill="#fff" stroke="none" />
        <path d="M3 29 C5 49 35 49 37 29 M20 44 V53" />
      </svg>
    </RoundButton>
  </div>
)

const App = () => {
  return (
    <div className="flex h-[2400px] w-[1080px] flex-col overflow-hidden bg-white font-['Noto_Sans_CJK_SC',sans-serif]">
      <StatusBar />
      <Header />
      <div className="relative flex h-[2093px] flex-col overflow-hidden bg-[#355489]">
        <Wallpaper />
        <div className="relative flex h-[1937px] flex-col overflow-hidden pl-[48px] pr-[48px]">
          <div className="-mt-[60px] h-[79px] w-[757px] shrink-0 self-end rounded-[34px] bg-[#d8fdd2]">
            <div className="relative left-[639px] top-[69px] flex h-[85px] w-[95px] items-center justify-center rounded-[42px] bg-white shadow-[0_0_2px_rgba(0,0,0,0.2)]">
              <Heart />
            </div>
          </div>
          {messages.map((msg, i) => (
            <Bubble key={i} msg={msg} />
          ))}
          <div className="relative mt-[29px] h-[120px] w-[572px] shrink-0 self-end rounded-[34px] rounded-tr-none bg-[#d8fdd2]">
            <Tail out className="h-[33px]" />
            <div className="ml-[34px] mt-[33px] h-[10px] w-[14px] rounded-t-full bg-[#6b7a68]" />
          </div>
        </div>
        <RoundButton className="absolute left-[955px] top-[1801px] h-[92px] w-[92px] bg-[#e1e6f0] shadow-[0_1px_3px_rgba(0,0,0,0.3)]">
          <svg viewBox="0 0 32 38" className="mt-[4px] h-[38px] w-[32px]" fill="none" stroke="#5d6165" strokeWidth="5">
            <path d="M2 3 L16 17 L30 3 M2 20 L16 34 L30 20" />
          </svg>
        </RoundButton>
        <div className="relative mt-[8px]">
          <Composer />
        </div>
      </div>
      <div className="flex h-[45px] justify-center bg-[#f9f9fb] pt-[18px]">
        <div className="h-[10px] w-[428px] rounded-full bg-[#676767]" />
      </div>
    </div>
  )
}

export default App
